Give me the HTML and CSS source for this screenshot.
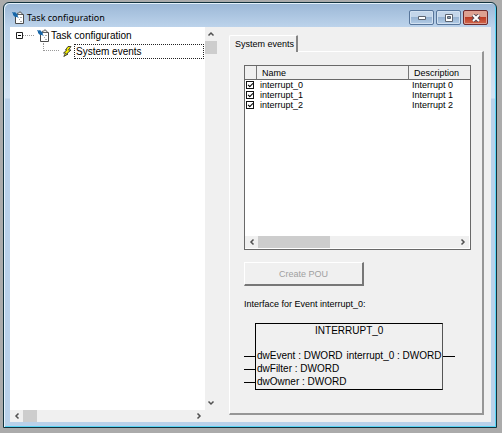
FILE: index.html
```html
<!DOCTYPE html>
<html lang="en">
<head>
<meta charset="utf-8">
<title>Task configuration</title>
<link rel="stylesheet" href="styles.css">
</head>
<body>
<svg class="defs" aria-hidden="true">
  <symbol id="task" viewBox="0 0 12 13">
    <path d="M3.5 3.5h8v9h-8z" fill="#fff" stroke="#4a4a4a"/>
    <path d="M5.500 3.500v-1.500h1.500l1-1.500 1 1.500h1v1.500z" fill="#eee" stroke="#555" stroke-width=".8"/>
    <path d="M8 6.500h2M7 8.500h1M8 10.500h2" stroke="#aaa"/>
    <path d="M0 1l2 .5L3 1l3 3-.5 1L7 7 4.500 6 3 6 1 4V3z" fill="#1766a8"/>
  </symbol>
  <symbol id="bolt" viewBox="0 0 9 11">
    <path d="M5 .5h3L5.500 4H8L3.500 8H5L.8 10.500 2.500 7H.5L3.800 4H2.500z" fill="#f4ee00" stroke="#222" stroke-width=".8"/>
  </symbol>
  <symbol id="up" viewBox="0 0 8 6"><path d="M1.500 4.500 4 2l2.500 2.500" fill="none" stroke="#505050" stroke-width="1.500"/></symbol>
  <symbol id="down" viewBox="0 0 8 6"><path d="M1.500 1.500 4 4l2.500-2.500" fill="none" stroke="#505050" stroke-width="1.500"/></symbol>
  <symbol id="left" viewBox="0 0 6 8"><path d="M4.500 1.500 2 4l2.500 2.500" fill="none" stroke="#505050" stroke-width="1.500"/></symbol>
  <symbol id="right" viewBox="0 0 6 8"><path d="M1.500 1.500 4 4 1.500 6.500" fill="none" stroke="#505050" stroke-width="1.500"/></symbol>
</svg>
<main class="window">
  <header class="titlebar">
    <svg class="task-icon"><use href="#task"/></svg>
    <h1>Task configuration</h1>
    <div class="controls">
      <button type="button" aria-label="Minimize"><svg width="10" height="6"><path d="M1.500 1.500h7v3h-7z" fill="#fff" stroke="#5c6470"/></svg></button>
      <button type="button" aria-label="Maximize"><svg width="10" height="8"><path d="M1.500.5h7v7h-7z" fill="#fff" stroke="#5c6470"/><path d="M3.500 2.500h3v2h-3z" fill="#89a" stroke="#5c6470"/></svg></button>
      <button type="button" class="close" aria-label="Close"><svg width="10" height="8"><path d="M2 1l6 6M8 1 2 7" stroke="#5a4650" stroke-width="4"/><path d="M2 1l6 6M8 1 2 7" stroke="#fff" stroke-width="2"/></svg></button>
    </div>
  </header>
  <div class="content">
    <nav class="tree-pane">
      <ul class="tree">
        <li class="tree-row root"><svg class="expander" viewBox="0 0 7 7"><path d="M.5.5h6v6h-6z" fill="#fff" stroke="#222"/><path d="M2 3.500h3" stroke="#000"/></svg><span class="branch"></span><svg class="task-icon"><use href="#task"/></svg><span class="tree-label">Task configuration</span></li>
        <li class="tree-row child"><span class="elbow"></span><svg class="bolt-icon"><use href="#bolt"/></svg><span class="tree-label selected">System events</span></li>
      </ul>
      <div class="vscroll">
        <button type="button" aria-label="Scroll up"><svg width="8" height="6"><use href="#up"/></svg></button>
        <div class="thumb"></div>
        <button type="button" class="end" aria-label="Scroll down"><svg width="8" height="6"><use href="#down"/></svg></button>
      </div>
      <div class="hscroll">
        <button type="button" aria-label="Scroll left"><svg width="6" height="8"><use href="#left"/></svg></button>
        <div class="thumb"></div>
        <button type="button" class="end" aria-label="Scroll right"><svg width="6" height="8"><use href="#right"/></svg></button>
      </div>
    </nav>
    <section class="details">
      <button type="button" class="tab">System events</button>
      <div class="panel">
        <div class="list">
          <table>
            <thead><tr><th class="check"></th><th class="name">Name</th><th>Description</th></tr></thead>
            <tbody>
              <tr><td class="check"><input type="checkbox" id="e0" aria-label="interrupt_0" checked></td><td><label for="e0">interrupt_0</label></td><td>Interrupt 0</td></tr>
              <tr><td class="check"><input type="checkbox" id="e1" aria-label="interrupt_1" checked></td><td><label for="e1">interrupt_1</label></td><td>Interrupt 1</td></tr>
              <tr><td class="check"><input type="checkbox" id="e2" aria-label="interrupt_2" checked></td><td><label for="e2">interrupt_2</label></td><td>Interrupt 2</td></tr>
            </tbody>
          </table>
          <div class="hscroll wide">
            <button type="button" aria-label="Scroll list left"><svg width="6" height="8"><use href="#left"/></svg></button>
            <div class="thumb"></div>
            <button type="button" class="end" aria-label="Scroll list right"><svg width="6" height="8"><use href="#right"/></svg></button>
          </div>
        </div>
        <button type="button" class="create" disabled>Create POU</button>
        <p class="caption">Interface for Event interrupt_0:</p>
        <div class="diagram">
          <div class="pins"><i></i><i></i><i></i></div>
          <div class="block">
            <h2>INTERRUPT_0</h2>
            <div class="ports">
              <ul><li>dwEvent : DWORD</li><li>dwFilter : DWORD</li><li>dwOwner : DWORD</li></ul>
              <ul><li>interrupt_0 : DWORD</li></ul>
            </div>
          </div>
          <div class="pins"><i></i></div>
        </div>
      </div>
    </section>
  </div>
</main>
</body>
</html>
```
FILE: styles.css
```css
* { box-sizing: border-box; }
body {
  margin: 0;
  height: 100vh;
  padding: 2px 5px 5px 3px;
  background: #ababab;
  color: #000;
  font: 10px/13px "Liberation Sans", Arial, sans-serif;
}
h1, h2, p, ul { margin: 0; padding: 0; font: inherit; }
ul { list-style: none; }
button { margin: 0; padding: 0; border: 0; background: none; font: inherit; }
svg { display: block; flex: none; }
.defs { position: absolute; width: 0; height: 0; }

.window {
  display: flex;
  flex-direction: column;
  height: 100%;
  padding: 0 5px 5px;
  border: 1px solid #12323e;
  border-radius: 6px 6px 0 0;
  background: linear-gradient(#9bb7d6, #bcd3eb 24px, #d3e3f4 95px, #b9d1ea 96px);
  box-shadow: inset 1px 1px #e4f1fb, inset -1px -1px #58d4f5;
}
.titlebar {
  display: flex;
  align-items: center;
  height: 24px;
  padding: 5px 3px 0 3px;
}
.titlebar h1 {
  flex: 1;
  margin-left: 3px;
  font: 9px/14px "Noto Sans", "Open Sans", sans-serif;
}
.task-icon { width: 12px; height: 13px; }
.controls { display: flex; gap: 2px; }
.controls button {
  display: grid;
  place-items: center;
  width: 25px;
  height: 15px;
  border: 1px solid #57759a;
  border-radius: 2px;
  background: linear-gradient(#c4d6ea 50%, #98b4d3 50%, #b3cce6);
  box-shadow: inset 0 0 0 1px #d2e1f1;
}
.controls .close {
  border-color: #6d2a2e;
  background: linear-gradient(#dda091 50%, #bd3b25 50%, #d2694d);
  box-shadow: inset 0 0 0 1px #dfa093;
}

.content {
  flex: 1;
  display: grid;
  grid-template-columns: 207px 1fr;
  min-height: 0;
  margin-left: 1px;
  background: #f0f0f0;
}
.tree-pane {
  display: grid;
  grid-template: 1fr 12px / 1fr 12px;
}
.tree { padding-left: 6px; background: #fff; }
.tree-row { display: flex; align-items: center; height: 16px; }
.expander { width: 7px; height: 7px; }
.branch { width: 11px; margin-right: 3px; border-top: 1px dotted #999; }
.elbow {
  width: 16px;
  height: 8px;
  align-self: flex-start;
  margin: 0 4px 0 27px;
  border: dotted #999;
  border-width: 0 0 1px 1px;
}
.bolt-icon { width: 9px; height: 11px; }
.tree-label { margin-left: 2px; }
.selected {
  flex: 1;
  margin-right: 1px;
  padding-left: 1px;
  border: 1px dotted #222;
}
.vscroll { display: flex; flex-direction: column; }
.hscroll { display: flex; }
.vscroll button, .hscroll button {
  display: grid;
  place-items: center;
  width: 12px;
  height: 14px;
}
.hscroll { height: 12px; background: #f0f0f0; }
.hscroll button { width: 13px; height: 12px; }
.thumb { background: #cdcdcd; }
.vscroll .thumb { height: 13px; }
.hscroll .thumb { width: 14px; }
.vscroll .end { margin-top: auto; }
.hscroll .end { margin-left: auto; }

.details {
  display: flex;
  flex-direction: column;
  align-items: flex-start;
  padding: 8px 8px 7px 12px;
  font: 9px/12px "Liberation Sans", Arial, sans-serif;
}
.tab {
  z-index: 1;
  height: 17px;
  margin-bottom: -1px;
  padding: 0 2px 0 5px;
  border: 1px solid #fff;
  border-width: 1px 2px 0 1px;
  border-right-color: #858585;
  border-radius: 2px 1px 0 0;
  background: #f0f0f0;
}
.panel {
  flex: 1;
  align-self: stretch;
  display: flex;
  flex-direction: column;
  padding: 13px 11px 0 14px;
  border: 1px solid #fff;
  border-right: 2px solid #969696;
  border-bottom: 2px solid #969696;
}
.list {
  display: flex;
  flex-direction: column;
  height: 185px;
  border: 1px solid #696969;
  background: #fff;
}
table { width: 100%; table-layout: fixed; border-spacing: 0; }
th {
  height: 14px;
  padding: 0 0 0 5px;
  border-right: 1px solid #777;
  border-bottom: 1px solid #696969;
  background: #f0f0f0;
  font-weight: normal;
  line-height: 12px;
  text-align: left;
}
th:last-child { border-right: 0; }
th.check { width: 12px; padding: 0; }
th.name { width: 152px; }
tbody tr { height: 10px; }
td { padding: 0 0 0 3px; line-height: 10px; }
td.check { padding: 0 0 0 1px; }
td input {
  appearance: none;
  display: block;
  width: 8px;
  height: 8px;
  margin: 0;
  border: 1px solid #111;
  background: #fff;
}
td input::before {
  content: "";
  display: block;
  width: 4px;
  height: 2px;
  margin: 1px;
  border: solid #000;
  border-width: 0 0 1px 1px;
  transform: rotate(-45deg);
}
.list .hscroll { margin: auto 1px 1px 0; }
.wide .thumb { width: 72px; }
.create {
  width: 120px;
  height: 24px;
  margin-top: 12px;
  border: 1px solid #fff;
  border-right: 2px solid #777;
  border-bottom: 2px solid #777;
  color: #a0a0a0;
}
.caption { margin: 12px 0 13px; }
.diagram {
  display: grid;
  grid-template-columns: 11px 1fr 12px;
  margin-right: 16px;
  font: 10px/13px "Liberation Sans", Arial, sans-serif;
}
.pins { padding-top: 26px; }
.pins i { display: block; height: 13px; }
.pins i::before { content: ""; display: block; height: 7px; border-bottom: 1px solid #000; }
.block { height: 67px; padding: 0 1px 1px; border: 1px solid #000; border-right: 1px solid #555; }
.block h2 { height: 25px; text-align: center; }
.ports { display: flex; justify-content: space-between; white-space: nowrap; }
```
